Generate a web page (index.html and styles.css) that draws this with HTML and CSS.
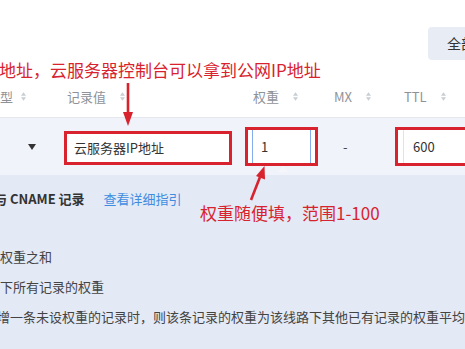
FILE: index.html
```html
<!DOCTYPE html>
<html lang="zh-CN">
<head>
<meta charset="utf-8">
<title>解析记录</title>
<link rel="stylesheet" href="styles.css">
</head>
<body>
<div class="page">
  <div class="toolbar">
    <div class="btn">全部</div>
  </div>
  <div class="thead">
    <div class="th th-first">类型<svg class="sort" viewBox="0 0 6 10"><path d="M3 0L6 4H0z M3 10L0 6H6z"/></svg></div>
    <div class="th">记录值<svg class="sort" viewBox="0 0 6 10"><path d="M3 0L6 4H0z M3 10L0 6H6z"/></svg></div>
    <div class="th">权重<svg class="sort" viewBox="0 0 6 10"><path d="M3 0L6 4H0z M3 10L0 6H6z"/></svg></div>
    <div class="th">MX<svg class="sort" viewBox="0 0 6 10"><path d="M3 0L6 4H0z M3 10L0 6H6z"/></svg></div>
    <div class="th">TTL<svg class="sort" viewBox="0 0 6 10"><path d="M3 0L6 4H0z M3 10L0 6H6z"/></svg></div>
  </div>
  <div class="trow">
    <div class="td td-type"><span class="caret"></span></div>
    <div class="td"><div class="mark mark-value"><div class="input">云服务器IP地址</div></div></div>
    <div class="td"><div class="mark mark-weight"><div class="input input-focus">1</div></div></div>
    <div class="td td-mx">-</div>
    <div class="td"><div class="mark mark-ttl"><div class="input input-ttl">600</div></div></div>
  </div>
  <div class="panel">
    <p class="line line-head"><b>与 CNAME 记录</b><a class="link">查看详细指引</a></p>
    <p class="line line-gap">权重之和</p>
    <p class="line">下所有记录的权重</p>
    <p class="line line-cut">增一条未设权重的记录时，则该条记录的权重为该线路下其他已有记录的权重平均值</p>
  </div>

  <div class="note note-top">地址，云服务器控制台可以拿到公网IP地址</div>
  <div class="note note-weight">权重随便填，范围1-100</div>
  <span class="tip-pointer"></span>
  <svg class="arrows" viewBox="0 0 465 349" width="465" height="349">
    <line x1="128" y1="83" x2="128" y2="114" stroke="#d8232e" stroke-width="2.6"/>
    <path d="M123 112 L133 112 L128 126 Z" fill="#d8232e"/>
    <line x1="251" y1="200" x2="260" y2="177" stroke="#d8232e" stroke-width="2.6"/>
    <path d="M256 176 L265 179.5 L264.5 166 Z" fill="#d8232e"/>
  </svg>
</div>
</body>
</html>
```

FILE: styles.css
```css
html, body {
  margin: 0;
  padding: 0;
  width: 465px;
  height: 349px;
  overflow: hidden;
  background: #ffffff;
}

.page {
  position: relative;
  width: 465px;
  height: 349px;
  overflow: hidden;
  font-family: "Noto Sans CJK SC", "Noto Sans", sans-serif;
  color: #333;
}

.toolbar {
  height: 76px;
  box-sizing: border-box;
  padding: 27px 0 0 428px;
  display: flex;
}

.btn {
  flex: none;
  width: 80px;
  height: 33px;
  box-sizing: border-box;
  padding-left: 19px;
  line-height: 33px;
  font-size: 14px;
  color: #333;
  background: #e8edf5;
  border-radius: 4px;
}

.thead,
.trow {
  display: grid;
  grid-template-columns: 80px 186px 81px 70px 120px;
  margin-left: -13px;
  align-items: center;
}

.thead {
  height: 41px;
  border-bottom: 1px solid #e4e7ed;
  font-size: 13px;
  color: #8f9399;
}

.th {
  display: flex;
  align-items: center;
  gap: 14px;
  white-space: nowrap;
}

.th-first {
  gap: 8px;
}

.sort {
  width: 5px;
  height: 9px;
  fill: #c9cdd4;
}

.trow {
  height: 57px;
  background: #f0f3f9;
}

.td {
  display: flex;
  align-items: center;
  font-size: 13px;
  white-space: nowrap;
}

.td-type {
  padding-left: 41px;
}

.caret {
  width: 0;
  height: 0;
  border-left: 4px solid transparent;
  border-right: 4px solid transparent;
  border-top: 6px solid #333;
}

.td-mx {
  padding-left: 9px;
  color: #444;
}

.mark {
  box-sizing: border-box;
  border: 3px solid #d8232e;
  background: #ffffff;
  display: flex;
}

.mark-value {
  margin-left: -3px;
  width: 168px;
  height: 34px;
  margin-top: 2px;
}

.mark-weight {
  margin-left: -8px;
  width: 73px;
  height: 39px;
  padding: 0 4px;
}

.mark-ttl {
  margin-left: -9px;
  width: 80px;
  height: 39px;
  padding-left: 5px;
}

.input {
  flex: 1;
  display: flex;
  align-items: center;
  padding-left: 7px;
  font-size: 13px;
  color: #333;
  background: #fff;
}

.input-focus {
  border-left: 1.5px solid #84aeea;
  border-right: 1.5px solid #84aeea;
  padding-left: 8px;
}

.input-ttl {
  border-left: 1px solid #dfe3ea;
  border-right: 1px solid #dfe3ea;
  padding-left: 9px;
}

.panel {
  background: #e3e9f5;
  height: 174px;
  padding-top: 9px;
  box-sizing: border-box;
}

.line {
  margin: 0;
  height: 30px;
  line-height: 30px;
  font-size: 13px;
  color: #444;
  white-space: nowrap;
}

.line-head {
  margin-left: -6px;
  display: flex;
  gap: 19px;
}

.line-head b {
  color: #333;
  font-weight: 700;
}

.link {
  color: #3f8de0;
}

.line-gap {
  margin-top: 28px;
}

.line-cut {
  margin-left: -3px;
}

.note {
  position: absolute;
  color: #d8232e;
  font-size: 17px;
  white-space: nowrap;
  line-height: 20px;
}

.note-top {
  left: -1px;
  top: 60px;
}

.note-weight {
  left: 200px;
  top: 203px;
}

.tip-pointer {
  position: absolute;
  left: 278px;
  top: 166px;
  width: 0;
  height: 0;
  border-left: 5px solid transparent;
  border-right: 5px solid transparent;
  border-bottom: 6px solid #f4f6fb;
}

.arrows {
  position: absolute;
  left: 0;
  top: 0;
  pointer-events: none;
}
```
